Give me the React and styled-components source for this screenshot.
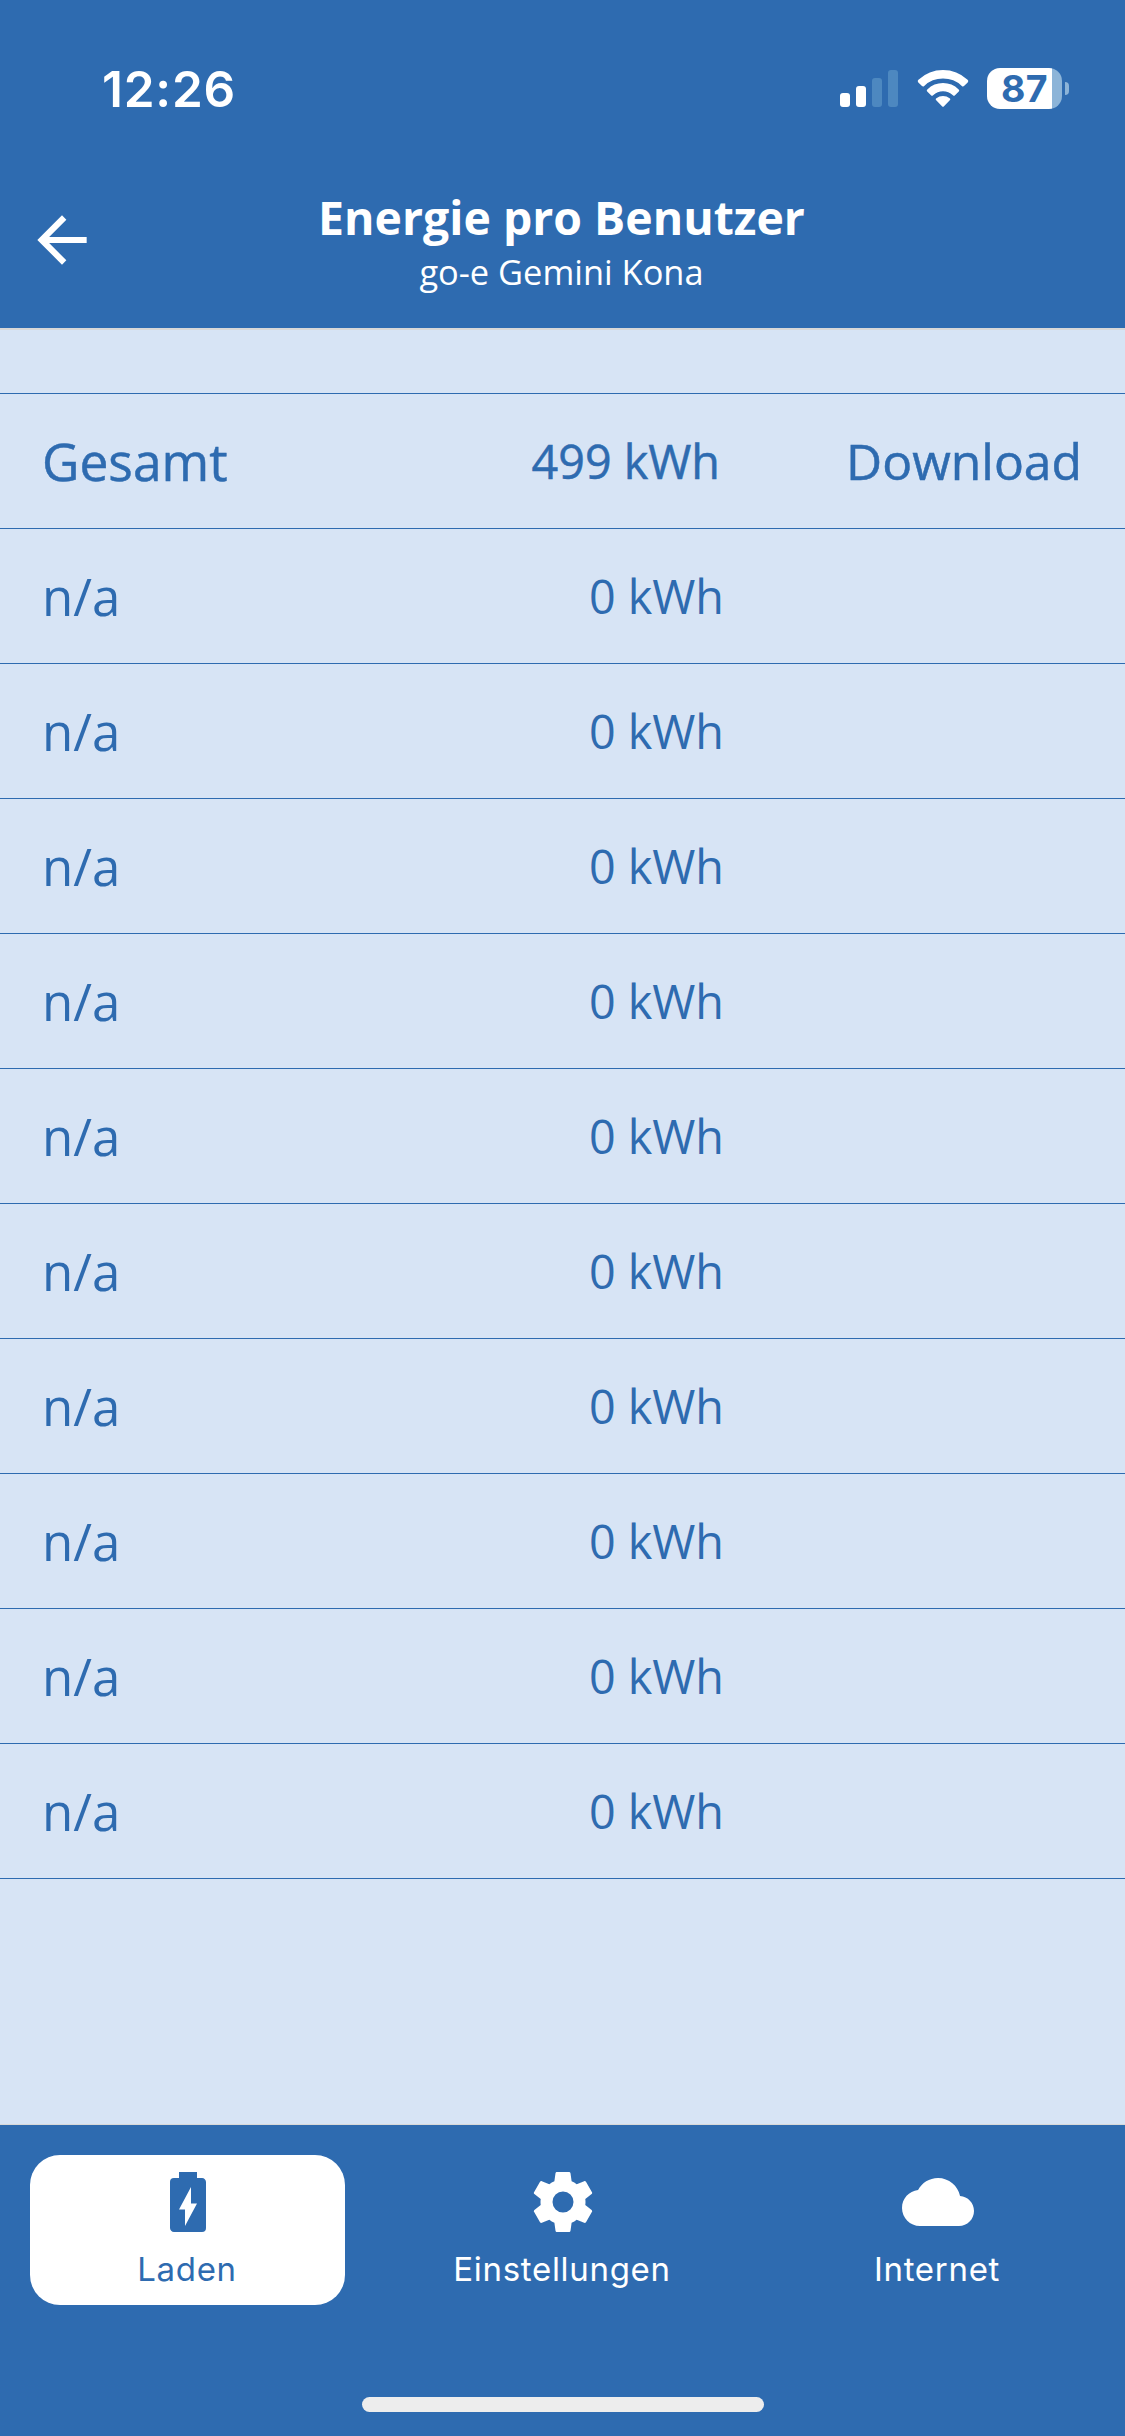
import styled, { createGlobalStyle } from 'styled-components';

const blue = '#2e6bb0';
const light = '#d7e4f5';

const GlobalStyle = createGlobalStyle`
  body {
    margin: 0;
    background: ${blue};
  }
`;

const Screen = styled.div`
  display: flex;
  flex-direction: column;
  width: 1125px;
  height: 2436px;
  overflow: hidden;
  background: ${blue};
  color: #fff;
  font-family: 'Open Sans', 'Noto Sans', sans-serif;
`;

const StatusBar = styled.div`
  display: flex;
  justify-content: space-between;
  box-sizing: border-box;
  height: 152px;
  padding: 59px 56px 0 102px;
  font-family: Inter, sans-serif;
`;

const Clock = styled.time`
  font-size: 49.5px;
  font-weight: 600;
  line-height: 60px;
  letter-spacing: 0.8px;
`;

const StatusIcons = styled.div`
  display: flex;
  height: 60px;
  padding-top: 9px;
  box-sizing: border-box;
`;

const Signal = styled.div`
  display: flex;
  align-items: flex-end;
  gap: 6px;
  height: 39px;
  margin-right: 19px;
`;

const SignalBar = styled.span`
  width: 10px;
  height: ${props => props.$height}px;
  border-radius: 3px;
  background: ${props => (props.$on ? '#fff' : '#4d88c0')};
`;

const Wifi = styled.svg`
  width: 52px;
  height: 39px;
  margin-right: 18px;
`;

const Battery = styled.div`
  display: flex;
  align-items: center;
  gap: 3px;
  height: 41px;
`;

const BatteryBody = styled.div`
  width: 75px;
  height: 41px;
  border-radius: 13px;
  background: linear-gradient(to right, #fff 65px, #8cb4d8 65px);
  color: ${blue};
  font-size: 37.5px;
  font-weight: 700;
  line-height: 41px;
  letter-spacing: 0.5px;
  text-align: center;
`;

const BatteryTip = styled.span`
  width: 4px;
  height: 13px;
  border-radius: 0 4px 4px 0;
  background: #8cb4d8;
`;

const Header = styled.header`
  display: grid;
  grid-template-columns: 125px 1fr 127px;
  height: 176px;
  border-bottom: 2px solid #d8d8d8;
`;

const BackButton = styled.button`
  align-self: center;
  width: 74px;
  height: 74px;
  margin-left: 25px;
  padding: 0;
  border: 0;
  background: none;
  color: #fff;
`;

const Titles = styled.div`
  padding-top: 33px;
  text-align: center;
`;

const Title = styled.h1`
  margin: 0;
  font-size: 46.4px;
  font-weight: 700;
  line-height: 64px;
`;

const Subtitle = styled.p`
  margin: 0;
  font-size: 34.4px;
  font-weight: 400;
  line-height: 46px;
`;

const List = styled.main`
  flex: 1;
  padding-top: 63px;
  border-bottom: 1px solid #d8d8d8;
  background: ${light};
  color: ${blue};
`;

// the totals row is drawn a touch heavier than the user rows
const Row = styled.div`
  display: grid;
  grid-template-columns: 400px 1fr 358px;
  box-sizing: border-box;
  height: 135px;
  padding: 0 43px 0 42px;
  border-top: 1px solid ${blue};
  line-height: 134px;
  white-space: nowrap;
  -webkit-text-stroke: ${props => (props.$total ? 0.5 : 0)}px ${blue};

  &:last-child {
    height: 136px;
    border-bottom: 1px solid ${blue};
  }
`;

const Name = styled.span`
  font-size: ${props => (props.$total ? 51.5 : 51)}px;
`;

const Energy = styled.span`
  padding-right: ${props => (props.$total ? 4 : 0)}px;
  font-size: 46.7px;
  text-align: right;
`;

const Download = styled.a`
  font-size: 49.8px;
  text-align: right;
`;

const TabBar = styled.nav`
  display: grid;
  grid-template-columns: repeat(3, 315px);
  gap: 60px;
  box-sizing: border-box;
  height: 272px;
  padding: 30px 30px 0;
  font-family: Inter, sans-serif;
`;

const Tab = styled.a`
  display: flex;
  flex-direction: column;
  align-items: center;
  box-sizing: border-box;
  height: 150px;
  padding-top: 11px;
  border-radius: 30px;
  background: ${props => (props.$active ? '#fff' : 'transparent')};
  color: ${props => (props.$active ? blue : '#fff')};
`;

const TabLabel = styled.span`
  margin: 11px 1px 0 0;
  font-size: 33px;
  line-height: 40px;
  letter-spacing: 0.7px;
`;

const HomeIndicator = styled.div`
  width: 402px;
  height: 15px;
  margin: 0 auto 24px;
  border-radius: 8px;
  background: #ededed;
`;

const Icon = ({ d, size = 72 }) => (
  <svg width={size} height={size} viewBox="0 0 24 24" fill="currentColor" display="block">
    <path fillRule="evenodd" d={d} />
  </svg>
);

const arrow = 'M20 11H7.83l5.59-5.59L12 4l-8 8 8 8 1.41-1.41L7.83 13H20v-2z';
const battery = 'M16.67 4H15V2H9v2H7.33A1.33 1.33 0 0 0 6 5.33v15.34C6 21.4 6.6 22 7.33 22h9.34A1.33 1.33 0 0 0 18 20.67V5.33C18 4.6 17.4 4 16.67 4M11 20v-5.5H9L13 7v5.5h2z';
const cog = 'M12 15.5A3.5 3.5 0 0 1 8.5 12 3.5 3.5 0 0 1 12 8.5a3.5 3.5 0 0 1 3.5 3.5 3.5 3.5 0 0 1-3.5 3.5m7.43-2.53c.04-.32.07-.64.07-.97 0-.33-.03-.66-.07-1l2.11-1.63c.19-.15.24-.42.12-.64l-2-3.46c-.12-.22-.39-.31-.61-.22l-2.49 1c-.52-.39-1.06-.73-1.69-.98l-.37-2.65A.506.506 0 0 0 14 2h-4c-.25 0-.46.18-.5.42l-.37 2.65c-.63.25-1.17.59-1.69.98l-2.49-1c-.22-.09-.49 0-.61.22l-2 3.46c-.13.22-.07.49.12.64L4.57 11c-.04.34-.07.67-.07 1 0 .33.03.65.07.97l-2.11 1.66c-.19.15-.25.42-.12.64l2 3.46c.12.22.39.3.61.22l2.49-1.01c.52.4 1.06.74 1.69.99l.37 2.65c.04.24.25.42.5.42h4c.25 0 .46-.18.5-.42l.37-2.65c.63-.26 1.17-.59 1.69-.99l2.49 1.01c.22.08.49 0 .61-.22l2-3.46c.12-.22.07-.49-.12-.64l-2.11-1.66z';
const cloud = 'M19.35 10.04C18.67 6.59 15.64 4 12 4 9.11 4 6.6 5.64 5.35 8.04 2.34 8.36 0 10.91 0 14c0 3.31 2.69 6 6 6h13c2.76 0 5-2.24 5-5 0-2.64-2.05-4.78-4.65-4.96z';

const tabs = [
  { label: 'Laden', icon: battery, active: true },
  { label: 'Einstellungen', icon: cog },
  { label: 'Internet', icon: cloud },
];

const users = Array.from({ length: 10 }, () => ({ name: 'n/a', energy: '0 kWh' }));

const App = () => {
  return (
    <>
      <GlobalStyle />
      <Screen>
        <StatusBar>
          <Clock>12:26</Clock>
          <StatusIcons>
            <Signal>
              <SignalBar $height={14} $on />
              <SignalBar $height={21} $on />
              <SignalBar $height={29} />
              <SignalBar $height={37} />
            </Signal>
            <Wifi viewBox="0 0 52 39" fill="#fff">
              <path d="M1.3 14.4Q0 13 1.4 11.7Q12 2 26 2T50.6 11.7Q52 13 50.7 14.4L47 18Q46 19 44.8 17.9Q37 10.6 26 10.6T7.2 17.9Q6 19 5 18Z" />
              <path d="M10.2 23.5Q9.2 22.4 10.3 21.4Q17 15 26 15T41.7 21.4Q42.8 22.4 41.8 23.5L38 27.2Q37 28.2 35.9 27.2Q31.6 23.3 26 23.3T16.1 27.2Q15 28.2 14 27.2Z" />
              <path d="M19.2 32.3Q18.1 31.2 19.4 30.3Q22.2 28 26 28T32.6 30.3Q33.9 31.2 32.8 32.3L27 38.3Q26 39.3 25 38.3Z" />
            </Wifi>
            <Battery>
              <BatteryBody>87</BatteryBody>
              <BatteryTip />
            </Battery>
          </StatusIcons>
        </StatusBar>

        <Header>
          <BackButton aria-label="Zurück"><Icon d={arrow} size={74} /></BackButton>
          <Titles>
            <Title>Energie pro Benutzer</Title>
            <Subtitle>go-e Gemini Kona</Subtitle>
          </Titles>
        </Header>

        <List>
          <Row $total>
            <Name $total>Gesamt</Name>
            <Energy $total>499 kWh</Energy>
            <Download>Download</Download>
          </Row>
          {users.map((user, i) => (
            <Row key={i}>
              <Name>{user.name}</Name>
              <Energy>{user.energy}</Energy>
            </Row>
          ))}
        </List>

        <TabBar>
          {tabs.map(tab => (
            <Tab key={tab.label} $active={tab.active}>
              <Icon d={tab.icon} />
              <TabLabel>{tab.label}</TabLabel>
            </Tab>
          ))}
        </TabBar>
        <HomeIndicator />
      </Screen>
    </>
  );
};

export default App;
